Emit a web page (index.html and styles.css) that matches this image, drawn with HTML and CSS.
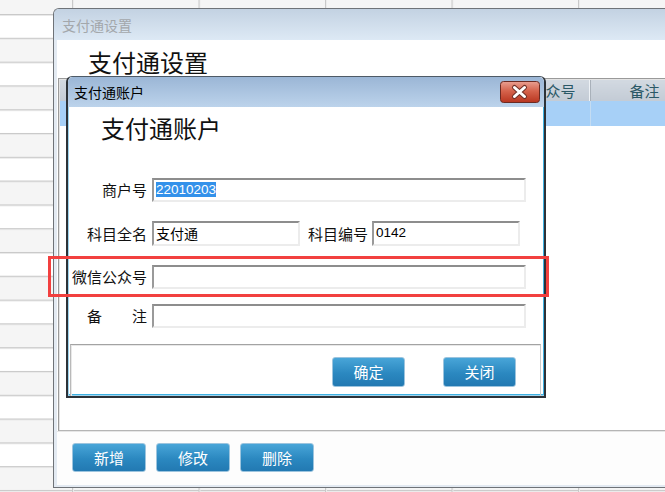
FILE: index.html
```html
<!DOCTYPE html>
<html lang="zh-CN">
  <head>
    <meta charset="UTF-8" />
    <meta name="viewport" content="width=device-width, initial-scale=1.0" />
    <title>支付通设置</title>
    <link rel="stylesheet" href="styles.css">
  </head>
  <body>
    <div class="window main-window">
      <div class="titlebar">支付通设置</div>
      <div class="window-body">
        <h1>支付通设置</h1>
        <div class="grid-panel">
          <table class="datagrid">
            <colgroup>
              <col class="col-head" />
              <col class="col-wechat" />
              <col class="col-remark" />
              <col />
            </colgroup>
            <thead>
              <tr>
                <th></th>
                <th class="th-wechat">微信公众号</th>
                <th class="th-remark">备注</th>
                <th></th>
              </tr>
            </thead>
            <tbody>
              <tr class="selected-row">
                <td></td>
                <td></td>
                <td></td>
                <td></td>
              </tr>
            </tbody>
          </table>
        </div>
        <div class="toolbar">
          <button class="blue-button">新增</button>
          <button class="blue-button">修改</button>
          <button class="blue-button">删除</button>
        </div>
      </div>
    </div>

    <div class="window dialog">
      <div class="titlebar">
        <span>支付通账户</span>
        <button class="close-button">
          <svg width="40" height="22" viewBox="0 0 40 22">
            <defs>
              <linearGradient id="red" x1="0" y1="0" x2="0" y2="1">
                <stop offset="0" stop-color="#e9a092" />
                <stop offset="0.45" stop-color="#d5634c" />
                <stop offset="1" stop-color="#b8351f" />
              </linearGradient>
            </defs>
            <rect x="0.5" y="0.5" width="39" height="21" rx="3" fill="url(#red)" stroke="#6b2a22" />
            <path d="M14.5 6.5 L24.5 15.5 M24.5 6.5 L14.5 15.5" stroke="#6e3027" stroke-width="5" stroke-linecap="round" />
            <path d="M14.5 6.5 L24.5 15.5 M24.5 6.5 L14.5 15.5" stroke="#ffffff" stroke-width="3" stroke-linecap="round" />
          </svg>
        </button>
      </div>
      <div class="dialog-body">
        <h2>支付通账户</h2>
        <div class="form">
          <div class="form-row">
            <span class="label">商户号</span>
            <div class="textbox wide digits"><span class="selected-text">22010203</span></div>
          </div>
          <div class="form-row row-tall">
            <span class="label">科目全名</span>
            <div class="textbox half">支付通</div>
            <span class="label label-inline">科目编号</span>
            <div class="textbox half digits">0142</div>
          </div>
          <div class="form-row">
            <span class="label">微信公众号</span>
            <div class="textbox wide"></div>
          </div>
          <div class="form-row row-last">
            <span class="label">备　　注</span>
            <div class="textbox wide"></div>
          </div>
        </div>
        <div class="button-panel">
          <button class="blue-button">确定</button>
          <button class="blue-button">关闭</button>
        </div>
      </div>
    </div>

    <div class="highlight"></div>
  </body>
</html>
```

FILE: styles.css
```css
body {
  margin: 0;
  width: 665px;
  height: 492px;
  overflow: hidden;
  position: relative;
  font-family: "Noto Sans CJK SC", "Liberation Sans", sans-serif;
  background-color: #fff;
  background-image:
    linear-gradient(to right, #c9c9c9 1px, #ececec 1px 2px, transparent 2px),
    linear-gradient(to bottom, #c9c9c9 1px, #e9e9e9 1px 2px, transparent 2px),
    linear-gradient(to bottom, #ffffff 50%, #f5f5f5 50%);
  background-size: 126.5px 100%, 100% 23.8px, 100% 47.6px;
  background-position: 72px 0, 0 14px, 0 14px;
}

.window {
  position: absolute;
  box-sizing: border-box;
}

/* back window, its right side runs off the screen */
.main-window {
  left: 53px;
  top: 8px;
  width: 612px;
  height: 480px;
  border: 1px solid #6f7378;
  border-right: none;
  border-radius: 6px 0 0 0;
  background-color: #e3eaf2;
  padding: 0 0 2px 3px;
  display: flex;
  flex-direction: column;
}

.main-window .titlebar {
  height: 31px;
  margin-left: -3px;
  padding-left: 8px;
  border-radius: 5px 0 0 0;
  background: linear-gradient(#c3d2e2, #dde9f5);
  color: #a3a7ab;
  font-size: 14px;
  line-height: 32px;
}

.window-body {
  flex: 1;
  background-color: #fff;
  display: flex;
  flex-direction: column;
}

h1 {
  margin: 7px 0 0 31px;
  height: 31px;
  font-size: 24px;
  font-weight: normal;
  line-height: 30px;
  color: #111;
}

.grid-panel {
  height: 350px;
  margin-left: 1px;
  border-left: 1px solid #9a9a9a;
  border-top: 1px solid #9a9a9a;
  box-shadow: inset 1px 1px 0 #e4e4e4;
  padding: 1px 0 0 1px;
  border-bottom: 1px solid #b5b5b5;
  overflow: hidden;
}

.datagrid {
  border-collapse: collapse;
  table-layout: fixed;
  width: 760px;
}

.col-head {
  width: 8px;
}

.col-wechat {
  width: 522px;
}

.col-remark {
  width: 100px;
}

.datagrid th {
  height: 21px;
  padding: 0;
  background: linear-gradient(#d2d9e1, #c3cbd5);
  border-right: 1px solid #a9b1ba;
  box-shadow: inset -1px 0 0 #eef2f6;
  color: #2a5866;
  font-size: 15px;
  font-weight: normal;
  line-height: 21px;
  white-space: nowrap;
  overflow: hidden;
}

.datagrid .th-wechat {
  text-align: right;
  padding-right: 14px;
}

.datagrid .th-remark {
  text-align: left;
  padding-left: 39px;
}

.selected-row td {
  height: 25px;
  padding: 0;
  background-color: #a7d0f7;
  border-right: 1px solid #c4dcf2;
}

.toolbar {
  flex: 1;
  border-top: 1px solid #e6e6e6;
  background-color: #fdfdfd;
  padding: 11px 0 0 15px;
  display: flex;
  gap: 10px;
}

.toolbar .blue-button {
  width: 74px;
  height: 29px;
}

.blue-button {
  width: 73px;
  height: 30px;
  padding: 0;
  border: 1px solid #9cc4de;
  border-radius: 3px;
  background: linear-gradient(#48a5d8, #2b88c0 55%, #2279b2);
  color: #fff;
  font-family: "Noto Sans CJK SC", sans-serif;
  font-size: 15px;
  line-height: 26px;
  cursor: pointer;
}

/* account dialog */
.dialog {
  left: 66px;
  top: 76px;
  width: 480px;
  height: 322px;
  border: 2px solid #2c3238;
  border-top: 1px solid #4e5a66;
  border-radius: 6px 6px 0 0;
  background-color: #fff;
  display: flex;
  flex-direction: column;
}

.dialog .titlebar {
  height: 30px;
  padding: 0 4px 0 6px;
  border-radius: 5px 5px 0 0;
  background: linear-gradient(#9bb6d6, #bcd3eb);
  color: #000;
  font-size: 14px;
  line-height: 31px;
  display: flex;
  justify-content: space-between;
}

.close-button {
  width: 40px;
  height: 22px;
  margin-top: 4px;
  padding: 0;
  border: none;
  background: none;
}

.close-button svg {
  display: block;
}

.dialog-body {
  flex: 1;
  display: flex;
  flex-direction: column;
  box-shadow: inset 1px -1px 0 #9ed4ee, inset -1px 0 0 #3fb1e2, inset 0 -2px 0 #3fb1e2;
}

h2 {
  margin: 7px 0 0 33px;
  height: 28px;
  font-size: 24px;
  font-weight: normal;
  line-height: 28px;
  color: #111;
}

.form {
  margin-top: 36px;
  display: flex;
  flex-direction: column;
  gap: 19px;
}

.form-row {
  display: flex;
  align-items: center;
  height: 24px;
}

.form-row.row-tall {
  height: 25px;
}

.form-row.row-last {
  margin-top: -4px;
}

.label {
  width: 79px;
  margin-right: 5px;
  text-align: right;
  font-size: 15px;
  line-height: 20px;
  color: #111;
  white-space: nowrap;
}

.label-inline {
  width: auto;
  margin-left: 8px;
  margin-right: 4px;
}

.textbox {
  box-sizing: border-box;
  height: 100%;
  border-top: 2px solid #8d8d8d;
  border-left: 2px solid #9a9a9a;
  border-right: 2px solid #ececec;
  border-bottom: 2px solid #ececec;
  padding-left: 2px;
  font-size: 14px;
  line-height: 20px;
  color: #000;
  background-color: #fff;
}

.textbox.wide {
  width: 374px;
}

.textbox.half {
  width: 148px;
}

.textbox.digits {
  font-family: "Liberation Sans", sans-serif;
  font-size: 13.5px;
}

.selected-text {
  background-color: #3391ea;
  color: #fff;
}

.button-panel {
  margin: 16px 3px 0 2px;
  flex: 1;
  border-top: 1px solid #a3a3a3;
  border-left: 1px solid #b9b9b9;
  border-right: 1px solid #c9c9c9;
  box-shadow: inset 1px 1px 0 #e8e8e8;
  display: flex;
  justify-content: flex-end;
  gap: 38px;
  padding: 12px 24px 0 0;
}

/* annotation over the screenshot */
.highlight {
  position: absolute;
  left: 48px;
  top: 256px;
  width: 501px;
  height: 41px;
  box-sizing: border-box;
  border: 3px solid #f2403f;
}
```
